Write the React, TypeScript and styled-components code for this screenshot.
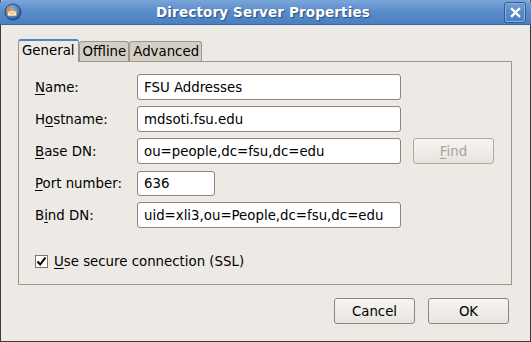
import styled, { createGlobalStyle } from 'styled-components';

const Global = createGlobalStyle`
  html, body { margin: 0; padding: 0; background: #edeae5; }
  body { font-family: "DejaVu Sans", sans-serif; font-size: 13.33px; color: #000; }
`;

const Window = styled.div`
  width: 531px;
  height: 342px;
  box-sizing: border-box;
  display: flex;
  flex-direction: column;
  background: #edeae5;
  border: 1px solid #3b3b3b;
  border-top: none;
`;

const TitleBar = styled.div`
  height: 24px;
  flex: none;
  display: flex;
  align-items: center;
  padding: 0 5px 0 4px;
  background: linear-gradient(#7aa5d8 0%, #5b8dca 45%, #4a7fc0 100%);
  border-bottom: 1px solid #35649f;
  margin: 0 -1px;
  border-radius: 4px 4px 0 0;
`;

const Title = styled.div`
  flex: 1;
  text-align: center;
  color: #fff;
  font-weight: bold;
  font-size: 13.5px;
  letter-spacing: 0.15px;
  text-shadow: 1px 1px 1px #2a4f80;
`;

const CloseBox = styled.div`
  width: 20px;
  height: 19px;
  border: 1px solid #2f5a92;
  border-radius: 3px;
  box-shadow: inset 0 0 0 1px #8fb2dc;
  display: flex;
  align-items: center;
  justify-content: center;
`;

const Body = styled.div`
  flex: 1;
  display: flex;
  flex-direction: column;
  padding: 13px 17px 0 17px;
`;

const Tabs = styled.div`
  display: flex;
  align-items: flex-end;
  height: 23px;
`;

const Tab = styled.div<{ $active?: boolean }>`
  box-sizing: border-box;
  height: ${({ $active }) => ($active ? '23px' : '20px')};
  padding: ${({ $active }) => ($active ? '0 3px 2px 3px' : '0 2px 0 3px')};
  display: flex;
  align-items: center;
  background: ${({ $active }) => ($active ? '#edeae5' : '#d4cfc6')};
  border: 1px solid #9c9689;
  border-bottom: none;
  border-top: ${({ $active }) => ($active ? '2px solid #4f86c8' : '1px solid #9c9689')};
  border-radius: 3px 3px 0 0;
  margin-bottom: ${({ $active }) => ($active ? '-1px' : '0')};
  position: relative;
  z-index: ${({ $active }) => ($active ? 1 : 0)};
`;

const Panel = styled.div`
  width: 494px;
  box-sizing: border-box;
  height: 224px;
  border: 1px solid #9c9689;
  padding: 12px 16px 0 16px;
`;

const Form = styled.div`
  display: grid;
  grid-template-columns: 102px 264px 12px 81px;
  grid-auto-rows: 26px;
  row-gap: 6px;
  align-items: center;
`;

const Label = styled.label`
  grid-column: 1;
`;

const U = styled.span`
  text-decoration: underline;
  text-underline-offset: 2px;
`;

const Input = styled.div<{ $w?: number }>`
  grid-column: 2;
  box-sizing: border-box;
  height: ${({ $w }) => ($w ? '25px' : '26px')};
  width: ${({ $w }) => ($w ? `${$w}px` : '100%')};
  background: #fff;
  border: 1px solid #8c877b;
  border-radius: 3px;
  padding: 0 6px;
  display: flex;
  align-items: center;
  white-space: nowrap;
  overflow: hidden;
`;

const Button = styled.div<{ $disabled?: boolean }>`
  box-sizing: border-box;
  width: 81px;
  height: 26px;
  border: 1px solid ${({ $disabled }) => ($disabled ? '#b0aa9d' : '#8c877b')};
  border-radius: 3px;
  background: linear-gradient(#f7f6f3, #e7e4de);
  color: ${({ $disabled }) => ($disabled ? '#a8a396' : '#000')};
  display: flex;
  align-items: center;
  justify-content: center;
`;

const FindCell = styled.div`
  grid-column: 4;
`;

const CheckRow = styled.div`
  display: flex;
  align-items: center;
  gap: 6px;
  margin-top: 26px;
`;

const Check = styled.div`
  width: 13px;
  height: 13px;
  box-sizing: border-box;
  border: 1px solid #7d786d;
  background: #fff;
  display: flex;
  align-items: center;
  justify-content: center;
`;

const Actions = styled.div`
  display: flex;
  justify-content: flex-end;
  gap: 13px;
  padding: 13px 4px 0 0;
`;

function AppIcon() {
  return (
    <svg width="18" height="18" viewBox="0 0 18 18">
      <defs>
        <radialGradient id="g" cx="0.4" cy="0.35" r="0.7">
          <stop offset="0" stopColor="#8fc4f2" />
          <stop offset="1" stopColor="#1d4f9a" />
        </radialGradient>
      </defs>
      <circle cx="9" cy="9" r="8" fill="url(#g)" stroke="#1b3f78" strokeWidth="0.8" />
      <path d="M3.5 7.5 L12.5 7.5 L12.5 13 L3.5 13 Z" fill="#f3e7c6" stroke="#b98a3a" strokeWidth="0.6" />
      <path d="M3.5 7.5 L8 10.8 L12.5 7.5" fill="none" stroke="#b98a3a" strokeWidth="0.6" />
      <path d="M2.5 9 C3 5 6 3 10 3.5 C8 4.5 6.5 6 6 8 Z" fill="#e8892a" />
    </svg>
  );
}

export default function App() {
  return (
    <>
      <Global />
      <Window>
        <TitleBar>
          <AppIcon />
          <Title>Directory Server Properties</Title>
          <CloseBox>
            <svg width="11" height="11" viewBox="0 0 11 11">
              <path d="M2 2 L9 9 M9 2 L2 9" stroke="#fff" strokeWidth="2.4" strokeLinecap="square" />
            </svg>
          </CloseBox>
        </TitleBar>
        <Body>
          <Tabs>
            <Tab $active>General</Tab>
            <Tab>Offline</Tab>
            <Tab>Advanced</Tab>
          </Tabs>
          <Panel>
            <Form>
              <Label><U>N</U>ame:</Label>
              <Input>FSU Addresses</Input>
              <Label>H<U>o</U>stname:</Label>
              <Input>mdsoti.fsu.edu</Input>
              <Label><U>B</U>ase DN:</Label>
              <Input>ou=people,dc=fsu,dc=edu</Input>
              <FindCell>
                <Button $disabled><span><U>F</U>ind</span></Button>
              </FindCell>
              <Label><U>P</U>ort number:</Label>
              <Input $w={78}>636</Input>
              <Label>B<U>i</U>nd DN:</Label>
              <Input>uid=xli3,ou=People,dc=fsu,dc=edu</Input>
            </Form>
            <CheckRow>
              <Check>
                <svg width="11" height="11" viewBox="0 0 11 11">
                  <path d="M1.5 5.5 L4.2 8.5 L9.5 1.5" fill="none" stroke="#000" strokeWidth="2" />
                </svg>
              </Check>
              <span><U>U</U>se secure connection (SSL)</span>
            </CheckRow>
          </Panel>
          <Actions>
            <Button>Cancel</Button>
            <Button>OK</Button>
          </Actions>
        </Body>
      </Window>
    </>
  );
}
